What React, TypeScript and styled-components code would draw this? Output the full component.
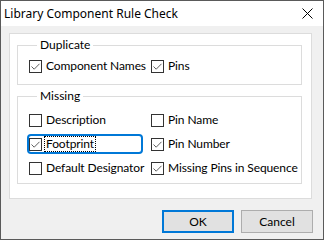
import React from "react";
import styled, { createGlobalStyle } from "styled-components";

const GlobalStyle = createGlobalStyle`
  html, body {
    margin: 0;
    padding: 0;
    background: #ffffff;
  }
  body {
    font-family: "Lato", "Noto Sans", sans-serif;
    font-size: 12px;
    color: #000000;
  }
`;

interface CheckItem {
  label: string;
  checked: boolean;
  focused?: boolean;
}

const duplicateItems: CheckItem[] = [
  { label: "Component Names", checked: true },
  { label: "Pins", checked: true },
];

const missingItems: CheckItem[] = [
  { label: "Description", checked: false },
  { label: "Pin Name", checked: false },
  { label: "Footprint", checked: true, focused: true },
  { label: "Pin Number", checked: true },
  { label: "Default Designator", checked: false },
  { label: "Missing Pins in Sequence", checked: true },
];

function CheckBox(props: { item: CheckItem }) {
  const { item } = props;
  return (
    <StyledCheck $focused={item.focused}>
      <StyledBox>
        {item.checked ? (
          <svg width="11" height="11" viewBox="0 0 11 11">
            <path d="M1.5 5.5 L4.2 8.2 L9.5 2.8" fill="none" stroke="#5f5f5f" strokeWidth="1" />
          </svg>
        ) : null}
      </StyledBox>
      <StyledLabel $focused={item.focused}>{item.label}</StyledLabel>
    </StyledCheck>
  );
}

export default function App() {
  return (
    <>
      <GlobalStyle />
      <StyledWindow>
        <StyledTitleBar>
          <span>Library Component Rule Check</span>
          <svg width="11" height="11" viewBox="0 0 11 11">
            <path d="M0.5 0.5 L10.5 10.5 M10.5 0.5 L0.5 10.5" stroke="#000" strokeWidth="1" />
          </svg>
        </StyledTitleBar>
        <StyledBody>
          <StyledPanel>
            <StyledGroup $padTop={6} $padBottom={10}>
              <legend>Duplicate</legend>
              <StyledGrid>
                {duplicateItems.map((item) => (
                  <CheckBox key={item.label} item={item} />
                ))}
              </StyledGrid>
            </StyledGroup>
            <StyledGroup $padTop={9} $padBottom={7}>
              <legend>Missing</legend>
              <StyledGrid>
                {missingItems.map((item) => (
                  <CheckBox key={item.label} item={item} />
                ))}
              </StyledGrid>
            </StyledGroup>
          </StyledPanel>
          <StyledButtons>
            <StyledButton $primary>OK</StyledButton>
            <StyledButton>Cancel</StyledButton>
          </StyledButtons>
        </StyledBody>
      </StyledWindow>
    </>
  );
}

const StyledWindow = styled.div`
  width: 324px;
  height: 240px;
  box-sizing: border-box;
  border: 1px solid #5a5a5a;
  background: #f0f0f0;
  display: flex;
  flex-direction: column;
`;

const StyledTitleBar = styled.div`
  display: flex;
  align-items: center;
  justify-content: space-between;
  height: 25px;
  padding: 0 10px 0 3px;
  background: #ffffff;
  font-family: "Noto Sans", sans-serif;
  font-size: 12px;

  & > svg {
    margin-top: -1px;
  }
`;

const StyledBody = styled.div`
  display: flex;
  flex-direction: column;
  padding: 7px 10px 0 8px;
`;

const StyledPanel = styled.div`
  width: 303px;
  height: 166px;
  box-sizing: border-box;
  border: 1px solid #dcdcdc;
  background: #ffffff;
  padding: 4px 0 0 7px;
  display: flex;
  flex-direction: column;
  gap: 4px;
`;

const StyledGroup = styled.fieldset<{ $padTop: number; $padBottom: number }>`
  width: 285px;
  box-sizing: border-box;
  margin: 0;
  border: 1px solid #dcdcdc;
  padding: ${(p) => p.$padTop}px 0 ${(p) => p.$padBottom}px 11px;
  min-width: 0;

  & > legend {
    margin-left: 8px;
    padding: 0 3px;
    line-height: 14px;
    font-size: 12px;
  }
`;

const StyledGrid = styled.div`
  display: grid;
  grid-template-columns: 122px auto;
  row-gap: 8px;
`;

const StyledCheck = styled.div<{ $focused?: boolean }>`
  display: flex;
  align-items: center;
  gap: 2px;
  height: 16px;
  width: ${(p) => (p.$focused ? "112px" : "auto")};
  outline: ${(p) => (p.$focused ? "2px solid #0078d7" : "none")};
  outline-offset: 0;
  border-radius: 2px;
  white-space: nowrap;
  letter-spacing: -0.1px;
`;

const StyledBox = styled.div`
  width: 13px;
  height: 13px;
  box-sizing: border-box;
  border: 1px solid #333333;
  background: #ffffff;
  display: flex;
  align-items: center;
  justify-content: center;
  flex: none;
`;

const StyledLabel = styled.span<{ $focused?: boolean }>`
  padding: 0 1px;
  line-height: 14px;
  border: 1px dotted ${(p) => (p.$focused ? "#000000" : "transparent")};
`;

const StyledButtons = styled.div`
  display: flex;
  justify-content: flex-end;
  gap: 7px;
  margin-top: 11px;
`;

const StyledButton = styled.button<{ $primary?: boolean }>`
  width: 72px;
  height: 23px;
  box-sizing: border-box;
  padding: 0;
  background: #e1e1e1;
  border: ${(p) => (p.$primary ? "2px solid #0078d7" : "1px solid #adadad")};
  font-family: "Lato", "Noto Sans", sans-serif;
  font-size: 12px;
  color: #000000;
`;
